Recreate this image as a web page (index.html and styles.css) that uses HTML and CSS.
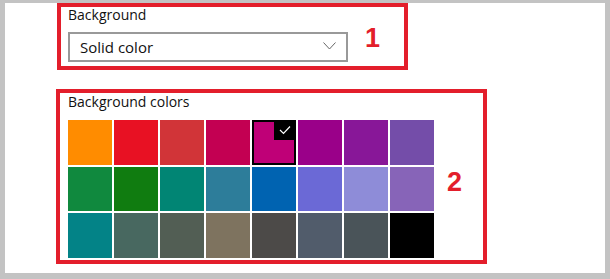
FILE: index.html
```html
<!DOCTYPE html>
<html lang="en">
<head>
    <meta charset="UTF-8">
    <title>Background settings</title>
    <link rel="stylesheet" href="styles.css">
</head>
<body>
    <div class="panel">
        <div class="callout callout-one">
            <div class="field">
                <div class="label">Background</div>
                <div class="select">
                    <span>Solid color</span>
                    <svg class="chevron" width="13" height="8" viewBox="0 0 13 8">
                        <path d="M0.5 0.5 L6.5 7 L12.5 0.5" fill="none" stroke="#666" stroke-width="1"/>
                    </svg>
                </div>
            </div>
            <div class="num num-one">1</div>
        </div>

        <div class="callout callout-two">
            <div class="field">
                <div class="label">Background colors</div>
                <div class="swatches">
                    <div class="swatch" style="background:#ff8c00"></div>
                    <div class="swatch" style="background:#e81123"></div>
                    <div class="swatch" style="background:#d13438"></div>
                    <div class="swatch" style="background:#c30052"></div>
                    <div class="swatch selected" style="background:#bf0077">
                        <span class="tick">
                            <svg width="12" height="10" viewBox="0 0 12 10">
                                <path d="M1 5 L4.5 8.5 L11 1.5" fill="none" stroke="#fff" stroke-width="1.2"/>
                            </svg>
                        </span>
                    </div>
                    <div class="swatch" style="background:#9a0089"></div>
                    <div class="swatch" style="background:#881798"></div>
                    <div class="swatch" style="background:#744da9"></div>

                    <div class="swatch" style="background:#10893e"></div>
                    <div class="swatch" style="background:#107c10"></div>
                    <div class="swatch" style="background:#018574"></div>
                    <div class="swatch" style="background:#2d7d9a"></div>
                    <div class="swatch" style="background:#0063b1"></div>
                    <div class="swatch" style="background:#6b69d6"></div>
                    <div class="swatch" style="background:#8e8cd8"></div>
                    <div class="swatch" style="background:#8764b8"></div>

                    <div class="swatch" style="background:#038387"></div>
                    <div class="swatch" style="background:#486860"></div>
                    <div class="swatch" style="background:#525e54"></div>
                    <div class="swatch" style="background:#7e735f"></div>
                    <div class="swatch" style="background:#4c4a48"></div>
                    <div class="swatch" style="background:#515c6b"></div>
                    <div class="swatch" style="background:#4a5459"></div>
                    <div class="swatch" style="background:#000000"></div>
                </div>
            </div>
            <div class="num num-two">2</div>
        </div>
    </div>
</body>
</html>
```

FILE: styles.css
```css
body {
    margin: 0;
    background: #c3c3c3;
    font-family: "Segoe UI", "Open Sans", "Noto Sans", Arial, sans-serif;
    color: #111;
}
.panel {
    margin: 3px 5px 0 5px;
    height: 270px;
    background: #fff;
    padding-left: 51px;
    box-sizing: border-box;
}
.callout {
    display: flex;
    border: 4px solid #e31e2b;
    box-sizing: border-box;
}
.callout-one {
    width: 351px;
    height: 67px;
    margin-left: 1px;
    padding: 0 0 0 7px;
}
.callout-two {
    width: 431px;
    height: 175px;
    margin-top: 19px;
    padding: 0 0 0 8px;
}
.label {
    font-size: 14px;
    line-height: 19px;
}
.callout-one .label {
    margin-top: -2px;
}
.callout-two .label {
    margin-top: -1px;
}
.select {
    margin-top: 8px;
    width: 280px;
    height: 30px;
    border: 2px solid #999;
    box-sizing: border-box;
    display: flex;
    align-items: center;
    justify-content: space-between;
    padding: 0 10px 0 10px;
    font-size: 15px;
}
.chevron {
    margin-top: -2px;
}
.num {
    color: #e31e2b;
    font-family: "Liberation Sans", Arial, sans-serif;
    font-weight: bold;
    font-size: 27px;
}
.num-one {
    margin-left: 17px;
    margin-top: 16px;
}
.num-two {
    margin-left: 13px;
    margin-top: 74px;
}
.swatches {
    margin-top: 9px;
    display: grid;
    grid-template-columns: repeat(8, 44px);
    grid-auto-rows: 44.5px;
    gap: 2px;
}
.swatch {
    position: relative;
}
.swatch.selected {
    box-shadow: inset 0 0 0 2px #000;
}
.tick {
    position: absolute;
    top: 0;
    right: 0;
    width: 22px;
    height: 20px;
    background: #000;
    display: flex;
    align-items: center;
    justify-content: center;
}
```
